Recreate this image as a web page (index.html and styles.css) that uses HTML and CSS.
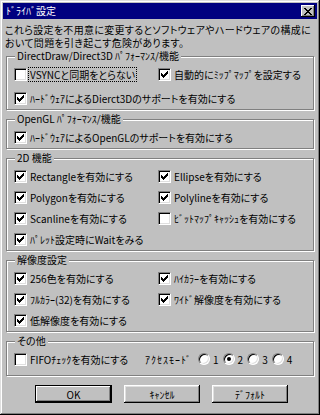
FILE: index.html
```html
<!DOCTYPE html>
<html lang="ja">
<head>
    <meta charset="UTF-8">
    <title>ﾄﾞﾗｲﾊﾞ設定</title>
    <link rel="stylesheet" href="styles.css">
</head>
<body>
    <div class="window">
        <div class="titlebar">
            <span class="title">ﾄﾞﾗｲﾊﾞ設定</span>
            <span class="close">
                <svg width="8" height="7" viewBox="0 0 8 7"><path d="M0 0h2v1h-2zM6 0h2v1h-2zM1 1h2v1h-2zM5 1h2v1h-2zM2 2h4v1h-4zM3 3h2v1h-2zM2 4h4v1h-4zM1 5h2v1h-2zM5 5h2v1h-2zM0 6h2v1h-2zM6 6h2v1h-2z" fill="#000"/></svg>
            </span>
        </div>

        <div class="intro">
            <p>これら設定を不用意に変更するとソフトウェアやハードウェアの構成に</p>
            <p>おいて問題を引き起こす危険があります。</p>
        </div>

        <div class="group g-direct">
            <div class="group-title">DirectDraw/Direct3D ﾊﾟﾌｫｰﾏﾝｽ/機能</div>
            <div class="rows">
                <div class="check"><span class="box"></span><span class="label focus">VSYNCと同期をとらない</span></div>
                <div class="check"><span class="box on"></span><span class="label">自動的にﾐｯﾌﾟﾏｯﾌﾟを設定する</span></div>
                <div class="check wide"><span class="box on"></span><span class="label">ﾊｰﾄﾞｳｪｱによるDierct3Dのサポートを有効にする</span></div>
            </div>
        </div>

        <div class="group g-opengl">
            <div class="group-title">OpenGL ﾊﾟﾌｫｰﾏﾝｽ/機能</div>
            <div class="rows">
                <div class="check wide"><span class="box on"></span><span class="label">ﾊｰﾄﾞｳｪｱによるOpenGLのサポートを有効にする</span></div>
            </div>
        </div>

        <div class="group g-2d">
            <div class="group-title">2D 機能</div>
            <div class="rows">
                <div class="check"><span class="box on"></span><span class="label">Rectangleを有効にする</span></div>
                <div class="check"><span class="box on"></span><span class="label">Ellipseを有効にする</span></div>
                <div class="check"><span class="box on"></span><span class="label">Polygonを有効にする</span></div>
                <div class="check"><span class="box on"></span><span class="label">Polylineを有効にする</span></div>
                <div class="check"><span class="box on"></span><span class="label">Scanlineを有効にする</span></div>
                <div class="check"><span class="box"></span><span class="label">ﾋﾞｯﾄﾏｯﾌﾟｷｬｯｼｭを有効にする</span></div>
                <div class="check wide"><span class="box on"></span><span class="label">ﾊﾟﾚｯﾄ設定時にWaitをみる</span></div>
            </div>
        </div>

        <div class="group g-res">
            <div class="group-title">解像度設定</div>
            <div class="rows">
                <div class="check"><span class="box on"></span><span class="label">256色を有効にする</span></div>
                <div class="check"><span class="box on"></span><span class="label">ﾊｲｶﾗｰを有効にする</span></div>
                <div class="check"><span class="box on"></span><span class="label">ﾌﾙｶﾗｰ(32)を有効にする</span></div>
                <div class="check"><span class="box on"></span><span class="label">ﾜｲﾄﾞ解像度を有効にする</span></div>
                <div class="check wide"><span class="box on"></span><span class="label">低解像度を有効にする</span></div>
            </div>
        </div>

        <div class="group g-other">
            <div class="group-title">その他</div>
            <div class="other-row">
                <div class="check fifo"><span class="box"></span><span class="label">FIFOﾁｪｯｸを有効にする</span></div>
                <div class="access">
                    <span class="access-label">ｱｸｾｽﾓｰﾄﾞ</span>
                    <span class="radio"><span class="dot"></span><span>1</span></span>
                    <span class="radio"><span class="dot on"></span><span>2</span></span>
                    <span class="radio"><span class="dot"></span><span>3</span></span>
                    <span class="radio"><span class="dot"></span><span>4</span></span>
                </div>
            </div>
        </div>

        <div class="buttons">
            <button class="btn default">OK</button>
            <button class="btn">ｷｬﾝｾﾙ</button>
            <button class="btn">ﾃﾞﾌｫﾙﾄ</button>
        </div>
    </div>
</body>
</html>
```

FILE: styles.css
```css
body {
    margin: 0;
    background: #c0c0c0;
    font-family: "Noto Sans CJK JP", "Noto Sans", sans-serif;
    font-size: 10px;
    font-feature-settings: "palt";
    color: #000;
}
.window {
    width: 320px;
    height: 415px;
    box-sizing: border-box;
    padding: 3px;
    background: #c0c0c0;
    box-shadow: inset -1px -1px #000, inset 1px 1px #dfdfdf, inset -2px -2px #808080, inset 2px 2px #fff;
}
.titlebar {
    height: 16px;
    background: #000080;
    display: flex;
    align-items: center;
    justify-content: space-between;
    padding: 0 2px 0 3px;
}
.title {
    color: #fff;
    line-height: 14px;
}
.close {
    width: 14px;
    height: 12px;
    box-sizing: border-box;
    background: #c0c0c0;
    display: flex;
    align-items: center;
    justify-content: center;
    box-shadow: inset -1px -1px #000, inset 1px 1px #fff, inset -2px -2px #808080;
}
.intro {
    margin: 4px 0 0 2px;
    letter-spacing: 0.3px;
    white-space: nowrap;
}
.intro p {
    margin: 0;
    height: 13px;
    line-height: 13px;
}
.group {
    margin: 9px 3px 0;
    border: 1px solid #808080;
    box-shadow: inset 1px 1px #fff, 1px 1px #fff;
    padding: 0 7px 3px;
}
.g-direct {
    margin-top: 7px;
}
.g-other {
    padding-bottom: 8px;
}
.group-title {
    width: fit-content;
    margin: -7px 0 0 1px;
    padding: 0 2px;
    background: #c0c0c0;
    line-height: 12px;
}
.rows {
    display: grid;
    grid-template-columns: 144px 1fr;
    row-gap: 5px;
    padding-top: 4px;
}
.g-direct .rows {
    row-gap: 8px;
}
.check {
    display: flex;
    align-items: center;
    gap: 2px;
    height: 16px;
    white-space: nowrap;
}
.wide {
    grid-column: 1 / 3;
}
.label {
    padding: 0 1px;
    line-height: 13px;
}
.focus {
    outline: 1px dotted #000;
}
.box {
    width: 13px;
    height: 13px;
    box-sizing: border-box;
    flex: none;
    background: #fff;
    border: 1px solid;
    border-color: #808080 #fff #fff #808080;
    box-shadow: inset 1px 1px #000, inset -1px -1px #dfdfdf;
    display: flex;
    align-items: center;
    justify-content: center;
}
.box.on::before {
    content: "";
    width: 7px;
    height: 7px;
    background: url("data:image/svg+xml,%3Csvg xmlns='http://www.w3.org/2000/svg' width='7' height='7'%3E%3Cpath d='M6 0h1v1h-1zM5 1h2v1h-2zM0 2h1v1h-1zM4 2h3v1h-3zM0 3h2v1h-2zM3 3h3v1h-3zM0 4h5v1h-5zM1 5h3v1h-3zM2 6h1v1h-1z'/%3E%3C/svg%3E");
}
.other-row {
    display: flex;
    align-items: center;
    padding-top: 4px;
}
.fifo {
    width: 131px;
}
.access {
    display: flex;
    align-items: center;
    height: 16px;
}
.access-label {
    letter-spacing: 1px;
    margin-right: 6px;
}
.radio {
    display: flex;
    align-items: center;
    gap: 3px;
    margin-right: 4px;
}
.dot {
    width: 12px;
    height: 12px;
    box-sizing: border-box;
    border-radius: 50%;
    background: #fff;
    border: 1px solid;
    border-color: #808080 #fff #fff #808080;
    box-shadow: inset 1px 1px #000, inset -1px -1px #dfdfdf;
    display: flex;
    align-items: center;
    justify-content: center;
}
.dot.on::before {
    content: "";
    width: 4px;
    height: 4px;
    border-radius: 50%;
    background: #000;
}
.buttons {
    display: flex;
    gap: 12px;
    padding: 9px 0 0 32px;
}
.btn {
    width: 76px;
    height: 18px;
    padding: 0;
    font: inherit;
    color: #000;
    background: #c0c0c0;
    border: none;
    box-shadow: inset -1px -1px #000, inset 1px 1px #fff, inset -2px -2px #808080, inset 2px 2px #dfdfdf;
}
.btn.default {
    width: 77px;
    border: 1px solid #000;
    box-shadow: inset -1px -1px #000, inset 1px 1px #fff, inset -2px -2px #808080;
}
```
